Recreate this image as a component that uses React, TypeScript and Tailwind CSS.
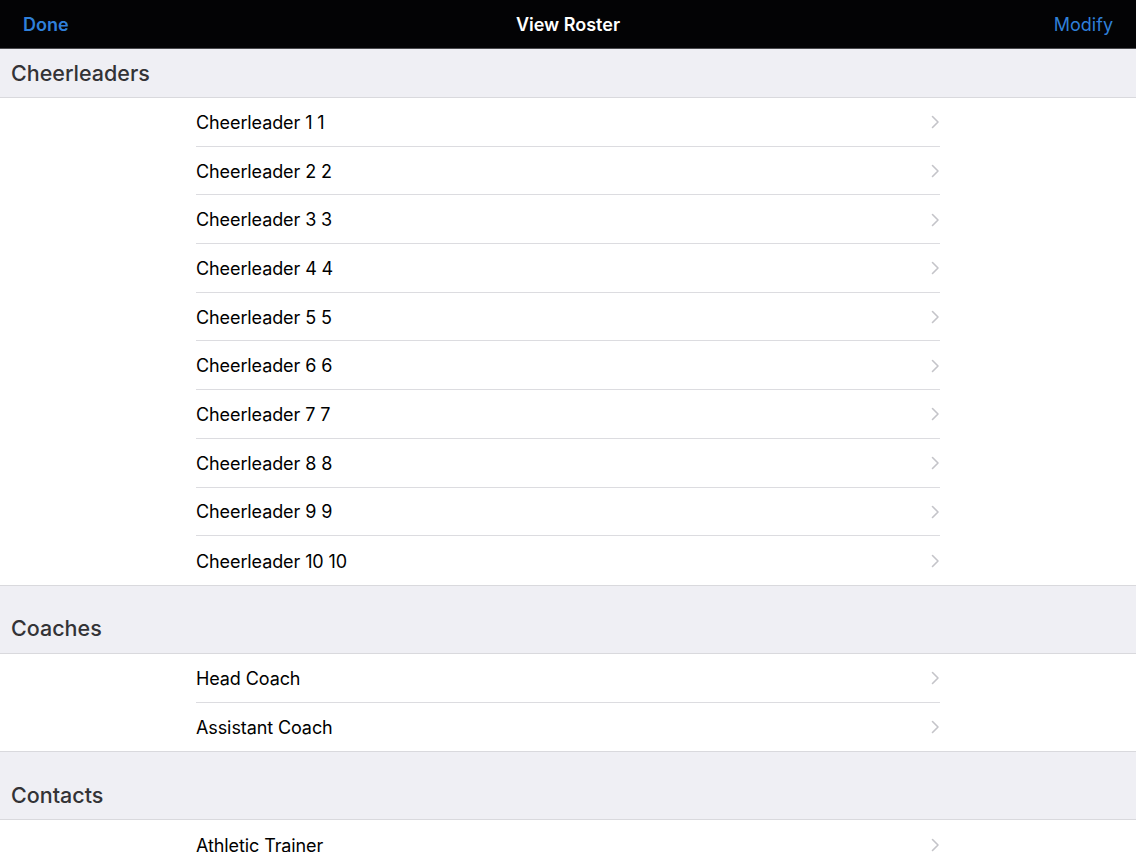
import { ReactNode } from 'react'

const font = { fontFamily: 'Inter, "Liberation Sans", sans-serif' }

const sections = [
  {
    title: 'Cheerleaders',
    rows: Array.from({ length: 10 }, (_, i) => `Cheerleader ${i + 1} ${i + 1}`),
  },
  { title: 'Coaches', rows: ['Head Coach', 'Assistant Coach'] },
  { title: 'Contacts', rows: ['Athletic Trainer'] },
]

function Chevron() {
  return (
    <svg width="9" height="14" viewBox="0 0 9 14" fill="none" className="shrink-0">
      <path d="M1.5 1.5 L7 7 L1.5 12.5" stroke="#c4c4c9" strokeWidth="1.6" strokeLinecap="round" strokeLinejoin="round" />
    </svg>
  )
}

function Row({ label, last }: { label: string; last: boolean }) {
  return (
    <div className="flex h-[48.7px] bg-white">
      <div
        className={
          'ml-[196px] w-[744px] flex items-center justify-between pt-[1px] ' +
          (last ? '' : 'border-b border-[#dcdce0]')
        }
      >
        <span className="text-[18px] text-black tracking-[-0.1px]">{label}</span>
        <Chevron />
      </div>
    </div>
  )
}

function Header({ children, first }: { children: ReactNode; first: boolean }) {
  return (
    <div
      className={
        'bg-[#efeff4] border-b border-[#d9d9dd] flex items-end pl-[11px] pb-[13px] ' +
        (first ? 'h-[49px]' : 'h-[69px] border-t')
      }
    >
      <span className="text-[21.5px] font-medium text-[#333336] leading-none">{children}</span>
    </div>
  )
}

export default function App() {
  return (
    <div className="h-[852px] w-[1136px] overflow-hidden bg-[#efeff4]" style={font}>
      <div className="h-[49px] bg-[#030305] border-b border-[#4a4a4e] grid grid-cols-3 items-center px-[23px]">
        <span className="text-[18px] font-semibold text-[#2f7fd9]">Done</span>
        <span className="text-[18px] font-semibold text-white text-center">View Roster</span>
        <span className="text-[18px] text-[#2f7fd9] text-right">Modify</span>
      </div>
      {sections.map((s, si) => (
        <section key={s.title}>
          <Header first={si === 0}>{s.title}</Header>
          {s.rows.map((r, i) => (
            <Row key={r} label={r} last={i === s.rows.length - 1} />
          ))}
        </section>
      ))}
    </div>
  )
}
